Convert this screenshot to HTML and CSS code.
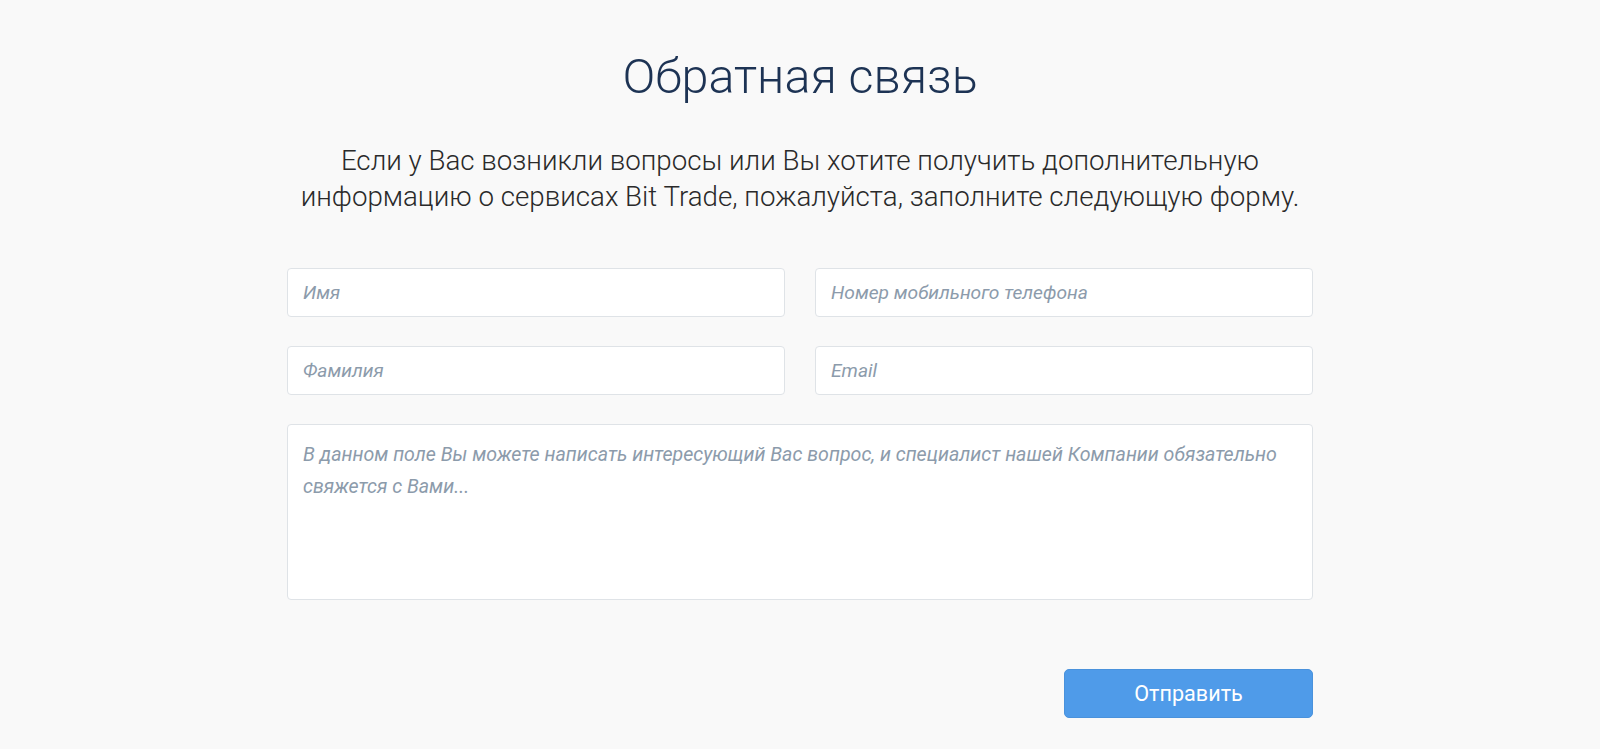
FILE: index.html
```html
<!DOCTYPE html>
<html lang="ru">
<head>
    <meta charset="UTF-8">
    <meta name="viewport" content="width=device-width, initial-scale=1.0">
    <title>Обратная связь</title>
    <link rel="stylesheet" href="styles.css">
</head>
<body>
    <div class="page">
        <div class="container">
            <h1>Обратная связь</h1>
            <p class="intro">Если у Вас возникли вопросы или Вы хотите получить дополнительную<br>информацию о сервисах Bit Trade, пожалуйста, заполните следующую форму.</p>

            <form class="feedback-form">
                <div class="form-grid">
                    <input type="text" placeholder="Имя">
                    <input type="text" placeholder="Номер мобильного телефона">
                    <input type="text" placeholder="Фамилия">
                    <input type="email" placeholder="Email">
                </div>
                <textarea placeholder="В данном поле Вы можете написать интересующий Вас вопрос, и специалист нашей Компании обязательно свяжется с Вами..."></textarea>
                <div class="button-container">
                    <button type="button">Отправить</button>
                </div>
            </form>
        </div>
    </div>
</body>
</html>
```

FILE: styles.css
```css
body {
    font-family: Roboto, "Liberation Sans", sans-serif;
    color: #333;
    background-color: #f9f9f9;
    margin: 0;
}

.page {
    display: flex;
    justify-content: center;
}

.container {
    width: 1026px;
}

h1 {
    text-align: center;
    font-weight: 300;
    font-size: 48.5px;
    line-height: 56px;
    color: #1d3354;
    margin: 49px 0 0;
}

.intro {
    text-align: center;
    font-weight: 300;
    font-size: 27.7px;
    line-height: 36px;
    color: #2a2a2a;
    margin: 38px -60px 0;
}

.feedback-form {
    margin-top: 53px;
}

.form-grid {
    display: grid;
    grid-template-columns: 1fr 1fr;
    gap: 29px 30px;
    margin-bottom: 29px;
}

input, textarea {
    width: 100%;
    box-sizing: border-box;
    border: 1px solid #dfe3e7;
    border-radius: 4px;
    background-color: #fff;
    font-family: Roboto, "Liberation Sans", sans-serif;
    font-size: 19.2px;
    color: #333;
    padding: 0 15px;
    outline: none;
}

input {
    height: 49px;
}

textarea {
    display: block;
    height: 176px;
    padding: 14px 15px;
    font-size: 19.6px;
    line-height: 31.5px;
    resize: none;
}

input::placeholder, textarea::placeholder {
    font-style: italic;
    color: #8c9bab;
}

.button-container {
    display: flex;
    justify-content: flex-end;
    margin-top: 69px;
}

button {
    width: 249px;
    height: 49px;
    background-color: #4f9be9;
    color: #fff;
    border: 1px solid #4a92dc;
    border-radius: 5px;
    font-family: Roboto, "Liberation Sans", sans-serif;
    font-size: 21.6px;
    cursor: pointer;
}

button:hover {
    background-color: #3f8ad8;
}
```
